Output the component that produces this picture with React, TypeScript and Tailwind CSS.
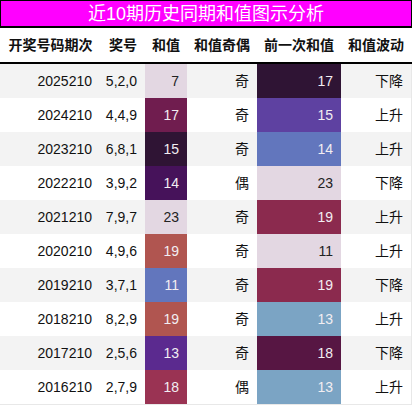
const rows = [
  { issue: "2025210", nums: "5,2,0", sum: 7, sumBg: "bg-[#e3d7e2]", sumLight: false, parity: "奇", prev: 17, prevBg: "bg-[#2f1434]", prevLight: true, trend: "下降" },
  { issue: "2024210", nums: "4,4,9", sum: 17, sumBg: "bg-[#701d4f]", sumLight: true, parity: "奇", prev: 15, prevBg: "bg-[#5e41a1]", prevLight: true, trend: "上升" },
  { issue: "2023210", nums: "6,8,1", sum: 15, sumBg: "bg-[#2f1434]", sumLight: true, parity: "奇", prev: 14, prevBg: "bg-[#6276bd]", prevLight: true, trend: "上升" },
  { issue: "2022210", nums: "3,9,2", sum: 14, sumBg: "bg-[#46125a]", sumLight: true, parity: "偶", prev: 23, prevBg: "bg-[#e3d7e2]", prevLight: false, trend: "下降" },
  { issue: "2021210", nums: "7,9,7", sum: 23, sumBg: "bg-[#e3d7e2]", sumLight: false, parity: "奇", prev: 19, prevBg: "bg-[#8b2a4e]", prevLight: true, trend: "上升" },
  { issue: "2020210", nums: "4,9,6", sum: 19, sumBg: "bg-[#b05550]", sumLight: true, parity: "奇", prev: 11, prevBg: "bg-[#e3d7e2]", prevLight: false, trend: "上升" },
  { issue: "2019210", nums: "3,7,1", sum: 11, sumBg: "bg-[#6276bd]", sumLight: true, parity: "奇", prev: 19, prevBg: "bg-[#8b2a4e]", prevLight: true, trend: "下降" },
  { issue: "2018210", nums: "8,2,9", sum: 19, sumBg: "bg-[#b05550]", sumLight: true, parity: "奇", prev: 13, prevBg: "bg-[#7ba4c4]", prevLight: true, trend: "上升" },
  { issue: "2017210", nums: "2,5,6", sum: 13, sumBg: "bg-[#5b2a8f]", sumLight: true, parity: "奇", prev: 18, prevBg: "bg-[#571643]", prevLight: true, trend: "下降" },
  { issue: "2016210", nums: "2,7,9", sum: 18, sumBg: "bg-[#9a3353]", sumLight: true, parity: "偶", prev: 13, prevBg: "bg-[#7ba4c4]", prevLight: true, trend: "上升" },
];

const cols = "grid grid-cols-[101px_44px_42px_70px_84px_70px]";

export default function App() {
  return (
    <div
      className="w-[412px] bg-white text-[#111]"
      style={{ fontFamily: '"Liberation Sans", "Noto Sans CJK SC", sans-serif' }}
    >
      <div className="h-[28px] border border-b-2 border-black bg-[#ff00ff] flex items-center justify-center text-white text-[18px] leading-none">
        近10期历史同期和值图示分析
      </div>

      <div className={`${cols} h-[36px] border-b-2 border-black text-[14px] font-bold`}>
        <div className="flex items-center justify-center">开奖号码期次</div>
        <div className="flex items-center justify-center">奖号</div>
        <div className="flex items-center justify-center">和值</div>
        <div className="flex items-center justify-center">和值奇偶</div>
        <div className="flex items-center justify-center">前一次和值</div>
        <div className="flex items-center justify-center">和值波动</div>
      </div>

      <div className="border-r border-b border-[#e8e8e8] w-[412px]">
        {rows.map((r, i) => (
          <div
            key={r.issue}
            className={`${cols} h-[34px] text-[14px] ${i % 2 === 0 ? "bg-[#f3f3f3]" : "bg-white"}`}
          >
            <div className="flex items-center justify-end pr-[9px]">{r.issue}</div>
            <div className="flex items-center justify-end pr-[8px]">{r.nums}</div>
            <div className={`flex items-center justify-end pr-[8px] ${r.sumBg} ${r.sumLight ? "text-[#f2eef2]" : "text-[#222]"}`}>
              {r.sum}
            </div>
            <div className="flex items-center justify-end pr-[8px]">{r.parity}</div>
            <div className={`flex items-center justify-end pr-[8px] ${r.prevBg} ${r.prevLight ? "text-[#f2eef2]" : "text-[#222]"}`}>
              {r.prev}
            </div>
            <div className="flex items-center justify-end pr-[8px]">{r.trend}</div>
          </div>
        ))}
      </div>
    </div>
  );
}
